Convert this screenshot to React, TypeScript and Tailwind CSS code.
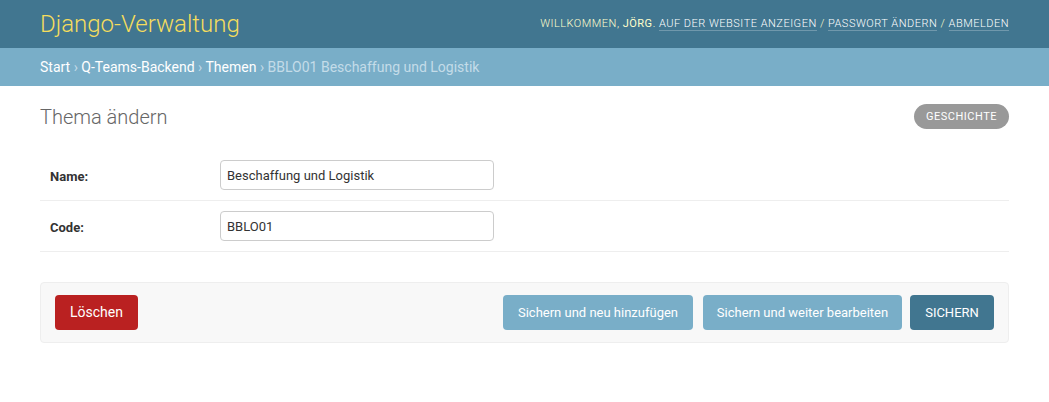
import React from "react";

export default function App() {
  const font = { fontFamily: "Roboto, 'Liberation Sans', Arial, sans-serif" };
  return (
    <div className="min-h-[402px] bg-white text-[#333] text-[14px]" style={font}>
      <div className="flex items-center justify-between bg-[#417690] px-[40px] py-[10px] h-[48px]">
        <h1 className="text-[24px] font-light leading-[28px] text-[#f5dd5d]">Django-Verwaltung</h1>
        <div className="text-[11px] font-light uppercase tracking-[0.5px] text-[#ffffcc] leading-[14px]">
          Willkommen, <strong className="font-normal">Jörg</strong>.{" "}
          <a className="text-white border-b border-white/25">Auf der Website anzeigen</a> /{" "}
          <a className="text-white border-b border-white/25">Passwort ändern</a> /{" "}
          <a className="text-white border-b border-white/25">Abmelden</a>
        </div>
      </div>
      <div className="bg-[#79aec8] px-[40px] py-[10px] h-[38px] text-[14px] leading-[18px] text-[#c4dce8]">
        <a className="text-white">Start</a> › <a className="text-white">Q-Teams-Backend</a> ›{" "}
        <a className="text-white">Themen</a> › BBLO01 Beschaffung und Logistik
      </div>
      <div className="px-[40px] pt-[18px]">
        <div className="flex items-start justify-between">
          <h1 className="text-[20px] font-light text-[#666] leading-[24px] mt-[1px]">Thema ändern</h1>
          <a className="bg-[#999] text-white text-[11px] uppercase tracking-[0.5px] rounded-[15px] px-[12px] py-[5px] leading-[15px]">
            Geschichte
          </a>
        </div>
        <div className="mt-[21px]">
          {[
            ["Name:", "Beschaffung und Logistik"],
            ["Code:", "BBLO01"],
          ].map(([l, v]) => (
            <div key={l} className="flex items-center p-[10px] border-b border-[#eee] text-[13px]">
              <label className="w-[170px] font-bold text-[#333] pt-[4px]">{l}</label>
              <input
                readOnly
                value={v}
                className="w-[274px] h-[30px] border border-[#ccc] rounded-[4px] px-[6px] text-[13px] text-[#333] outline-none"
                style={font}
              />
            </div>
          ))}
        </div>
        <div className="mt-[30px] flex items-center justify-between bg-[#f8f8f8] border border-[#eee] rounded-[4px] px-[14px] py-[12px]">
          <button className="bg-[#ba2121] text-white text-[14px] rounded-[4px] px-[15px] h-[35px]">Löschen</button>
          <div className="flex items-center">
            <button className="w-[190px] bg-[#79aec8] text-white text-[13px] rounded-[4px] h-[35px]">Sichern und neu hinzufügen</button>
            <button className="w-[199px] ml-[10px] bg-[#79aec8] text-white text-[13px] rounded-[4px] h-[35px]">Sichern und weiter bearbeiten</button>
            <button className="w-[84px] ml-[8px] bg-[#417690] text-white text-[13px] uppercase rounded-[4px] h-[35px]">Sichern</button>
          </div>
        </div>
      </div>
    </div>
  );
}
